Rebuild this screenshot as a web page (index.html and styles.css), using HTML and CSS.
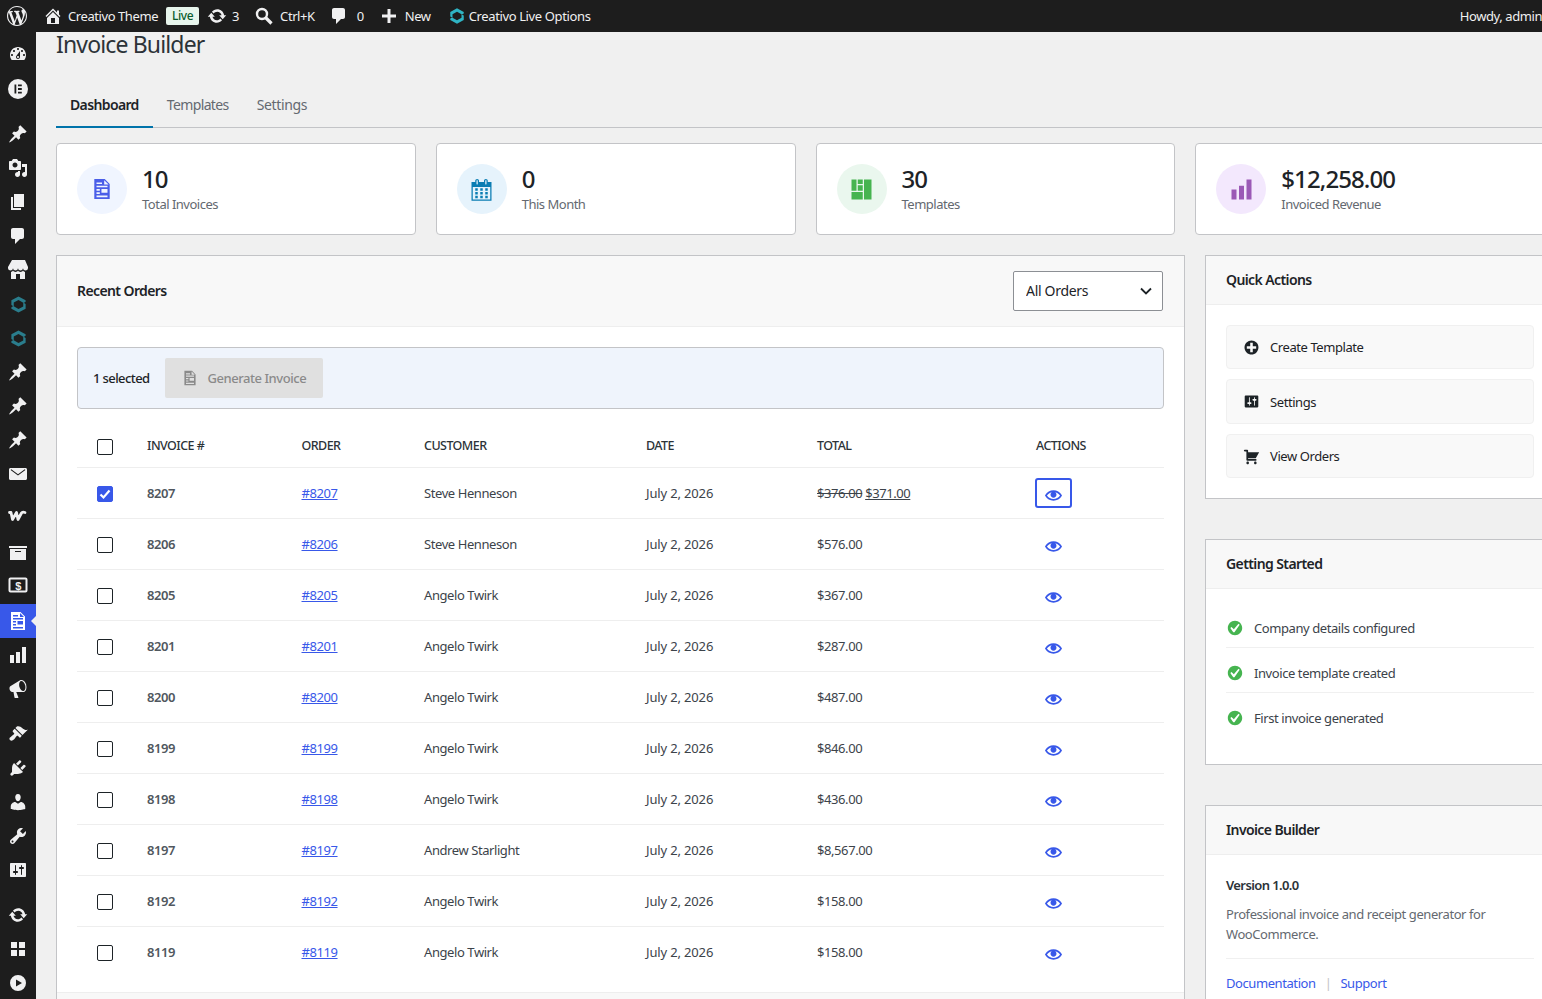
FILE: index.html
```html
<!DOCTYPE html>
<html lang="en">
<head>
    <meta charset="UTF-8">
    <meta name="viewport" content="width=device-width, initial-scale=1.0">
    <title>Invoice Builder</title>
    <link rel="stylesheet" href="styles.css">
</head>
<body>
    <svg class="sprite" xmlns="http://www.w3.org/2000/svg">
        <symbol id="i-wp" viewBox="0 0 20 20"><path d="M20 10c0-5.51-4.49-10-10-10C4.48 0 0 4.49 0 10c0 5.52 4.48 10 10 10 5.51 0 10-4.48 10-10zM7.78 15.37L4.37 6.22c.55-.02 1.17-.08 1.17-.08.5-.06.44-1.13-.06-1.11 0 0-1.45.11-2.37.11-.18 0-.37 0-.58-.01C4.12 2.69 6.87 1.11 10 1.11c2.33 0 4.45.87 6.05 2.34-.68-.11-1.65.39-1.65 1.58 0 .74.45 1.36.9 2.1.35.61.55 1.36.55 2.46 0 1.49-1.4 5-1.4 5l-3.03-8.37c.54-.02.82-.17.82-.17.5-.05.44-1.25-.06-1.22 0 0-1.44.12-2.38.12-.87 0-2.33-.12-2.33-.12-.5-.03-.56 1.2-.06 1.22l.92.08 1.26 3.41zM17.41 10c.24-.64.74-1.87.43-4.25.7 1.29 1.05 2.71 1.05 4.25 0 3.29-1.73 6.24-4.4 7.78.97-2.59 1.94-5.2 2.92-7.78zM6.1 18.09C3.12 16.65 1.11 13.53 1.11 10c0-1.3.23-2.48.72-3.59C3.25 10.3 4.67 14.2 6.1 18.09zm4.03-6.63l2.58 6.98c-.86.29-1.76.45-2.71.45-.79 0-1.57-.11-2.29-.33.81-2.38 1.62-4.74 2.42-7.1z"/></symbol>
        <symbol id="i-home" viewBox="0 0 20 20"><path d="M16 8.5l1.53 1.53-1.06 1.06L10 4.62l-6.47 6.47-1.06-1.06L10 2.5l4 4v-2h2v4zm-6-2.46l6 5.99V18H4v-5.97zM12 17v-5H8v5h4z"/></symbol>
        <symbol id="i-update" viewBox="0 0 20 20"><path d="M10.2 3.28c3.53 0 6.43 2.61 6.92 6h2.08l-3.5 4-3.5-4h2.32c-.45-1.97-2.21-3.45-4.32-3.45-1.45 0-2.73.71-3.54 1.78L4.95 5.66C6.23 4.2 8.11 3.28 10.2 3.28zm-.4 13.44c-3.52 0-6.43-2.61-6.92-6H.8l3.5-4c1.17 1.33 2.33 2.67 3.5 4H5.48c.45 1.97 2.21 3.45 4.32 3.45 1.45 0 2.73-.71 3.54-1.78l1.71 1.95c-1.28 1.46-3.15 2.38-5.25 2.38z"/></symbol>
        <symbol id="i-search" viewBox="0 0 20 20"><circle cx="8" cy="8" r="5" fill="none" stroke="currentColor" stroke-width="2.4"/><path d="M11.5 11.5l6 6" fill="none" stroke="currentColor" stroke-width="3.2"/></symbol>
        <symbol id="i-comment" viewBox="0 0 20 20"><path d="M5 2h9c1.1 0 2 .9 2 2v7c0 1.1-.9 2-2 2h-2l-5 5v-5H5c-1.1 0-2-.9-2-2V4c0-1.1.9-2 2-2z"/></symbol>
        <symbol id="i-plus" viewBox="0 0 20 20"><path d="M17 8.500v3h-5.500V17h-3v-5.500H3v-3h5.500V3h3v5.500z"/></symbol>
        <symbol id="i-hex" viewBox="0 0 20 20"><path d="M2.500 5.500L10 1.500l7.500 4v1.700l-2 1.100L10 5.200 5 8v4l-2.500-1.400z"/><path d="M17.500 14.500l-7.500 4-7.500-4v-1.700l2-1.100 5.500 3.100 5-2.800V8l2.500 1.400z"/></symbol>
        <symbol id="i-dashboard" viewBox="0 0 20 20"><path d="M3.760 16h12.480c1.100-1.370 1.760-3.110 1.760-5 0-4.420-3.580-8-8-8s-8 3.580-8 8c0 1.890.66 3.630 1.760 5zM10 4c.55 0 1 .45 1 1s-.45 1-1 1-1-.45-1-1 .45-1 1-1zM6 6c.55 0 1 .45 1 1s-.45 1-1 1-1-.45-1-1 .45-1 1-1zm8 0c.55 0 1 .45 1 1s-.45 1-1 1-1-.45-1-1 .45-1 1-1zm-5.370 5.550L12 7v6c0 1.100-.9 2-2 2s-2-.9-2-2c0-.57.24-1.080.63-1.450zM4 10c.55 0 1 .45 1 1s-.45 1-1 1-1-.45-1-1 .45-1 1-1zm12 0c.55 0 1 .45 1 1s-.45 1-1 1-1-.45-1-1 .45-1 1-1zm-5 3c0-.55-.45-1-1-1s-1 .45-1 1 .45 1 1 1 1-.45 1-1z"/></symbol>
        <symbol id="i-elementor" viewBox="0 0 20 20"><path fill-rule="evenodd" d="M10 0a10 10 0 100 20 10 10 0 000-20zM6.500 5.500h1.800v9H6.500zM10 5.500h3.800v1.800H10zM10 9.100h3.800v1.800H10zM10 12.700h3.800v1.800H10z"/></symbol>
        <symbol id="i-pin" viewBox="0 0 20 20"><path d="M10.440 3.020l1.820-1.820 6.360 6.350-1.830 1.820c-1.050-.68-2.480-.57-3.410.36l-.75.75c-.92.93-1.040 2.350-.35 3.410l-1.830 1.820-2.410-2.410-2.800 2.790c-.42.42-3.380 2.710-3.800 2.290s1.860-3.390 2.280-3.810l2.790-2.790L4.100 9.360l1.830-1.820c1.050.69 2.480.57 3.400-.36l.75-.75c.93-.92 1.050-2.350.36-3.410z"/></symbol>
        <symbol id="i-media" viewBox="0 0 20 20"><path d="M13 11V4c0-.55-.45-1-1-1h-1.670L9 1H5L3.670 3H2c-.55 0-1 .45-1 1v7c0 .55.45 1 1 1h10c.55 0 1-.45 1-1zM7 4.500c1.380 0 2.500 1.120 2.500 2.500S8.380 9.500 7 9.500 4.500 8.380 4.500 7 5.620 4.500 7 4.500zM14 6h5v10.500c0 1.380-1.120 2.500-2.500 2.500S14 17.880 14 16.500s1.120-2.500 2.500-2.500c.17 0 .34.02.5.05V9h-3V6zm-4 8.050V13h2v3.500c0 1.380-1.120 2.500-2.500 2.500S7 17.880 7 16.500 8.120 14 9.500 14c.17 0 .34.02.5.05z"/></symbol>
        <symbol id="i-page" viewBox="0 0 20 20"><path d="M6 15V2h10v13H6zm-1 1h8v2H3V5h2v11z"/></symbol>
        <symbol id="i-store" viewBox="0 0 20 20"><path d="M1 10c.41.29.96.43 1.500.43.55 0 1.090-.14 1.500-.43.62-.46 1-1.170 1-2 0 .83.37 1.540 1 2 .41.29.96.43 1.500.43.55 0 1.090-.14 1.500-.43.62-.46 1-1.170 1-2 0 .83.37 1.540 1 2 .41.29.96.43 1.510.43.54 0 1.080-.14 1.490-.43.62-.46 1-1.170 1-2 0 .83.37 1.540 1 2 .41.29.96.43 1.500.43.55 0 1.090-.14 1.500-.43.63-.46 1-1.170 1-2V7l-3-7H4L0 7v1c0 .83.37 1.540 1 2zm2 8.990h5v-5h4v5h5v-7c-.37-.05-.72-.22-1-.43-.63-.45-1-.73-1-1.560 0 .83-.38 1.110-1 1.560-.41.3-.95.43-1.490.44-.55 0-1.100-.14-1.510-.44-.63-.45-1-.73-1-1.560 0 .83-.38 1.110-1 1.560-.41.3-.95.43-1.500.44-.54 0-1.090-.14-1.500-.44-.63-.45-1-.73-1-1.570 0 .84-.38 1.120-1 1.570-.29.21-.63.38-1 .44v6.990z"/></symbol>
        <symbol id="i-mail" viewBox="0 0 20 20"><path fill-rule="evenodd" d="M2.500 4h15c.83 0 1.500.67 1.500 1.500v9c0 .83-.67 1.500-1.500 1.500h-15C1.670 16 1 15.330 1 14.500v-9C1 4.670 1.670 4 2.500 4zM3.300 5.200l-.7.9L10 11.600l7.400-5.500-.7-.9L10 10.200z"/></symbol>
        <symbol id="i-woo" viewBox="0 0 20 20"><path d="M1.500 6.500H3l1.500 7 4-7 1.500 7 3.500-6.500c.6-1 2-1 3.500-.5" fill="none" stroke="currentColor" stroke-width="2.800" stroke-linejoin="round" stroke-linecap="round"/></symbol>
        <symbol id="i-archive" viewBox="0 0 20 20"><path d="M19 3v2H1V3h18zM2 6h16v11H2V6zm11 3V8H7v1h6z"/></symbol>
        <symbol id="i-money" viewBox="0 0 20 20"><rect x="1.500" y="3.500" width="17" height="13" rx="1" fill="none" stroke="currentColor" stroke-width="2"/><text x="10" y="14.500" text-anchor="middle" font-family="Liberation Sans, sans-serif" font-size="11" font-weight="700" fill="currentColor">$</text></symbol>
        <symbol id="i-invoice" viewBox="0 0 20 20"><path fill-rule="evenodd" d="M3 1h9.500L17 5.500V19H3zM12 2v4h4zM5 4v1.500h5V4zM5 7v1.500h10V7zM5 10v1.500h3V10zM9.500 10v3.500H15V10zM5 13v1.500h3V13zM5 16v1.500h10V16z"/></symbol>
        <symbol id="i-chart" viewBox="0 0 20 20"><path d="M18 18V2h-4v16h4zm-6 0V7H8v11h4zm-6 0v-8H2v8h4z"/></symbol>
        <symbol id="i-megaphone" viewBox="0 0 20 20"><path d="M18.150 5.940c.46 1.620.38 3.220-.02 4.480-.42 1.280-1.260 2.180-2.300 2.480-.16.06-.26.06-.4.06-.06.02-.12.02-.18.02-.06.02-.14.02-.22.02h-6.800l2.220 5.500c.02.14-.06.26-.14.34-.08.1-.24.16-.34.16H6.950c-.1 0-.26-.06-.34-.16-.08-.08-.16-.2-.14-.34l-1-5.500H4.250l-.02-.02c-.5.06-1.080-.18-1.540-.62s-.88-1.080-1.060-1.880c-.24-.8-.2-1.560-.02-2.200.18-.62.58-1.080 1.060-1.300l.02-.02 9-5.400c.1-.06.18-.1.24-.16.06-.04.14-.08.24-.12.16-.08.28-.12.5-.18 1.040-.3 2.240.1 3.260.95 1.040.88 1.880 2.240 2.340 3.860zm-2.580 5.980h-.02c.4-.1.74-.34 1.040-.7.58-.7.86-1.760.86-3.040-.02-.64-.1-1.300-.28-1.980-.34-1.360-1.020-2.500-1.780-3.240-.76-.72-1.680-1.080-2.460-.86-.38.1-.7.34-1 .7-.58.7-.84 1.760-.84 3.040.02.64.1 1.300.28 1.980.34 1.340 1 2.480 1.780 3.200.78.74 1.620 1.100 2.420.9z"/></symbol>
        <symbol id="i-brush" viewBox="0 0 20 20"><path d="M14.480 11.060L7.410 3.990l1.500-1.500c.5-.56 2.300-.47 3.510.32 1.210.8 1.430 1.280 2.910 2.100 1.180.64 2.450 1.260 4.450.85zm-.71.71L6.700 4.700 4.930 6.470c-.39.39-.39 1.020 0 1.410l1.060 1.060c.39.39.39 1.030 0 1.420-.6.6-1.430 1.110-2.210 1.690-.35.26-.7.530-1.010.84C1.430 13.230.91 14.960 2 16.050c1.100 1.100 2.820.59 4.160-.75.31-.31.58-.66.84-1.010.58-.78 1.090-1.610 1.690-2.210.39-.39 1.030-.39 1.420 0l1.060 1.060c.39.39 1.020.39 1.410 0z"/></symbol>
        <symbol id="i-plugin" viewBox="0 0 20 20"><path d="M13.110 4.360L9.870 7.600 8 5.730l3.240-3.240c.35-.34 1.050-.2 1.560.32.52.51.66 1.210.31 1.550zm-8 1.770l.91-1.120 9.010 9.010-1.190.84c-.71.71-2.630 1.160-3.820 1.160H6.140L4.900 17.260c-.59.59-1.540.59-2.120 0-.59-.58-.59-1.530 0-2.120l1.240-1.240v-3.880c0-1.130.4-3.190 1.090-3.890zm7.260 3.970l3.240-3.240c.34-.35 1.040-.21 1.550.31.52.51.66 1.210.31 1.550l-3.240 3.250z"/></symbol>
        <symbol id="i-user" viewBox="0 0 20 20"><path d="M10 9.250c-2.270 0-2.730-3.440-2.730-3.440C7 4.020 7.820 2 9.970 2c2.160 0 2.980 2.020 2.710 3.810 0 0-.41 3.440-2.680 3.440zm0 2.570L12.720 10c2.390 0 4.520 2.330 4.520 4.530v2.490s-3.650 1.130-7.240 1.130c-3.650 0-7.240-1.130-7.240-1.130v-2.490c0-2.250 1.940-4.480 4.470-4.480z"/></symbol>
        <symbol id="i-tools" viewBox="0 0 20 20"><path d="M16.680 9.770c-1.340 1.340-3.300 1.670-4.950.99l-5.410 6.520c-.99.99-2.590.99-3.580 0s-.99-2.590 0-3.570l6.520-5.420c-.68-1.650-.35-3.610.99-4.950 1.280-1.280 3.120-1.620 4.720-1.060l-2.890 2.890 2.820 2.820 2.860-2.870c.53 1.580.18 3.390-1.080 4.650zM3.810 16.210c.4.39 1.040.39 1.430 0 .4-.4.4-1.040 0-1.430-.39-.4-1.030-.4-1.430 0-.39.39-.39 1.030 0 1.430z"/></symbol>
        <symbol id="i-settings" viewBox="0 0 20 20"><path d="M18 16V4c0-.55-.45-1-1-1H3c-.55 0-1 .45-1 1v12c0 .55.45 1 1 1h14c.55 0 1-.45 1-1zM8 11h1c.55 0 1 .45 1 1s-.45 1-1 1H8v1.500c0 .28-.22.5-.5.5s-.5-.22-.5-.5V13H6c-.55 0-1-.45-1-1s.45-1 1-1h1V5.500c0-.28.22-.5.5-.5s.5.22.5.5V11zm5-2h-1c-.55 0-1-.45-1-1s.45-1 1-1h1V5.500c0-.28.22-.5.5-.5s.5.22.5.5V7h1c.55 0 1 .45 1 1s-.45 1-1 1h-1v5.500c0 .28-.22.5-.5.5s-.5-.22-.5-.5V9z"/></symbol>
        <symbol id="i-grid" viewBox="0 0 20 20"><path d="M9 9V3H3v6h6zm8 0V3h-6v6h6zm-8 8v-6H3v6h6zm8 0v-6h-6v6h6z"/></symbol>
        <symbol id="i-play" viewBox="0 0 20 20"><path fill-rule="evenodd" d="M10 2a8 8 0 100 16 8 8 0 000-16zM8 6.500l6 3.500-6 3.500z"/></symbol>
        <symbol id="i-calendar" viewBox="0 0 20 20"><path d="M15 4h3v15H2V4h3V3c0-.41.15-.76.44-1.060.29-.29.65-.44 1.060-.44s.77.15 1.060.44c.29.3.44.65.44 1.060v1h4V3c0-.41.15-.76.44-1.060.29-.29.65-.44 1.060-.44s.77.15 1.060.44c.29.3.44.65.44 1.060v1zM6 3v2.500c0 .14.05.26.15.36.09.09.21.14.35.14s.26-.05.35-.14c.1-.1.15-.22.15-.36V3c0-.14-.05-.26-.15-.35-.09-.1-.21-.15-.35-.15s-.26.05-.35.15c-.1.09-.15.21-.15.35zm7 0v2.500c0 .14.05.26.14.36.1.09.22.14.36.14s.26-.05.36-.14c.09-.1.14-.22.14-.36V3c0-.14-.05-.26-.14-.35-.1-.1-.22-.15-.36-.15s-.26.05-.36.15c-.09.09-.14.21-.14.35zm4 15V8H3v10h14zM7 9v2H5V9h2zm2 0h2v2H9V9zm4 2V9h2v2h-2zm-6 1v2H5v-2h2zm2 0h2v2H9v-2zm4 2v-2h2v2h-2zm-6 1v2H5v-2h2zm4 2H9v-2h2v2zm4 0h-2v-2h2v2z"/></symbol>
        <symbol id="i-layout" viewBox="0 0 20 20"><path d="M2 2h4v9H2zM7 2h4v3.500H7zM12 2h6v16h-6zM7 6.500h4V11H7zM2 12h9v6H2z"/></symbol>
        <symbol id="i-plus-alt" viewBox="0 0 20 20"><path d="M15.800 4.200c3.200 3.210 3.200 8.390 0 11.600-3.210 3.200-8.390 3.200-11.600 0C1 12.590 1 7.410 4.200 4.200 7.410 1 12.590 1 15.800 4.200zm-4.300 11.300v-4h4v-3h-4v-4h-3v4h-4v3h4v4h3z"/></symbol>
        <symbol id="i-cart" viewBox="0 0 20 20"><path d="M6 13h9c.55 0 1 .45 1 1s-.45 1-1 1H5c-.55 0-1-.45-1-1V4H2c-.55 0-1-.45-1-1s.45-1 1-1h3c.55 0 1 .45 1 1v2h13l-4 7H6v1zm-.5 3c.83 0 1.500.67 1.500 1.500S6.330 19 5.500 19 4 18.330 4 17.500 4.670 16 5.500 16zm9 0c.83 0 1.500.67 1.500 1.500s-.67 1.500-1.500 1.500-1.500-.67-1.500-1.500.67-1.500 1.500-1.500z"/></symbol>
        <symbol id="i-yes" viewBox="0 0 20 20"><path d="M10 2c-4.420 0-8 3.580-8 8s3.580 8 8 8 8-3.580 8-8-3.580-8-8-8zm-.615 12.660h-1.340l-3.240-4.540 1.340-1.250 2.570 2.400 5.140-5.930 1.340.94-5.810 8.380z"/></symbol>
        <symbol id="i-eye" viewBox="0 0 20 20"><path d="M19.700 9.400C17.700 6 14 3.900 10 3.900S2.300 6 .3 9.400L0 10l.3.6c2 3.400 5.700 5.500 9.700 5.500s7.700-2.100 9.700-5.500l.3-.6-.3-.6zM10 14.100c-3.100 0-6-1.600-7.700-4.100C3.600 8 5.700 6.600 8 6.100c-.9.6-1.500 1.700-1.500 2.900 0 1.900 1.600 3.500 3.500 3.500s3.500-1.600 3.500-3.500c0-1.200-.6-2.300-1.500-2.900 2.300.5 4.400 1.900 5.700 3.900-1.700 2.500-4.600 4.100-7.700 4.100z"/></symbol>
    </svg>

    <header class="adminbar">
        <svg class="ab-logo"><use href="#i-wp"/></svg>
        <a class="ab-item ab-site"><svg class="ab-icon"><use href="#i-home"/></svg>Creativo Theme</a>
        <span class="ab-live">Live</span>
        <a class="ab-item ab-updates"><svg class="ab-icon"><use href="#i-update"/></svg>3</a>
        <a class="ab-item ab-search"><svg class="ab-icon"><use href="#i-search"/></svg>Ctrl+K</a>
        <a class="ab-item ab-comments"><svg class="ab-icon"><use href="#i-comment"/></svg>0</a>
        <a class="ab-item ab-new"><svg class="ab-icon"><use href="#i-plus"/></svg>New</a>
        <a class="ab-item ab-options"><svg class="ab-icon ab-hex"><use href="#i-hex"/></svg>Creativo Live Options</a>
        <a class="ab-item ab-howdy">Howdy, admin</a>
    </header>

    <div class="layout">
        <nav class="sidemenu">
            <a class="menu-item"><svg><use href="#i-dashboard"/></svg></a>
            <a class="menu-item mt-1"><svg><use href="#i-elementor"/></svg></a>
            <a class="menu-item mt-11"><svg><use href="#i-pin"/></svg></a>
            <a class="menu-item"><svg><use href="#i-media"/></svg></a>
            <a class="menu-item"><svg><use href="#i-page"/></svg></a>
            <a class="menu-item"><svg><use href="#i-comment"/></svg></a>
            <a class="menu-item"><svg><use href="#i-store"/></svg></a>
            <a class="menu-item teal"><svg><use href="#i-hex"/></svg></a>
            <a class="menu-item teal"><svg><use href="#i-hex"/></svg></a>
            <a class="menu-item"><svg><use href="#i-pin"/></svg></a>
            <a class="menu-item"><svg><use href="#i-pin"/></svg></a>
            <a class="menu-item"><svg><use href="#i-pin"/></svg></a>
            <a class="menu-item"><svg><use href="#i-mail"/></svg></a>
            <a class="menu-item mt-8"><svg><use href="#i-woo"/></svg></a>
            <a class="menu-item mt-3"><svg><use href="#i-archive"/></svg></a>
            <a class="menu-item mt-n2"><svg><use href="#i-money"/></svg></a>
            <a class="menu-item active mt-2"><svg><use href="#i-invoice"/></svg></a>
            <a class="menu-item"><svg><use href="#i-chart"/></svg></a>
            <a class="menu-item"><svg><use href="#i-megaphone"/></svg></a>
            <a class="menu-item mt-11"><svg><use href="#i-brush"/></svg></a>
            <a class="menu-item"><svg><use href="#i-plugin"/></svg></a>
            <a class="menu-item"><svg><use href="#i-user"/></svg></a>
            <a class="menu-item"><svg><use href="#i-tools"/></svg></a>
            <a class="menu-item"><svg><use href="#i-settings"/></svg></a>
            <a class="menu-item mt-11"><svg><use href="#i-update"/></svg></a>
            <a class="menu-item"><svg><use href="#i-grid"/></svg></a>
            <a class="menu-item"><svg><use href="#i-play"/></svg></a>
        </nav>

        <main class="content">
            <h1 class="page-title">Invoice Builder</h1>

            <div class="tabs">
                <a class="tab current">Dashboard</a>
                <a class="tab">Templates</a>
                <a class="tab">Settings</a>
            </div>

            <section class="stats">
                <div class="stat">
                    <span class="stat-icon blue"><svg class="doc"><use href="#i-invoice"/></svg></span>
                    <div><div class="stat-value">10</div><div class="stat-label">Total Invoices</div></div>
                </div>
                <div class="stat">
                    <span class="stat-icon sky"><svg><use href="#i-calendar"/></svg></span>
                    <div><div class="stat-value">0</div><div class="stat-label">This Month</div></div>
                </div>
                <div class="stat">
                    <span class="stat-icon green"><svg><use href="#i-layout"/></svg></span>
                    <div><div class="stat-value">30</div><div class="stat-label">Templates</div></div>
                </div>
                <div class="stat">
                    <span class="stat-icon purple"><svg><use href="#i-chart"/></svg></span>
                    <div><div class="stat-value">$12,258.00</div><div class="stat-label">Invoiced Revenue</div></div>
                </div>
            </section>

            <div class="columns">
                <section class="card orders">
                    <div class="card-head orders-head">
                        <h2>Recent Orders</h2>
                        <select class="filter"><option>All Orders</option></select>
                    </div>
                    <div class="orders-body">
                        <div class="bulk-bar">
                            <span class="bulk-count">1 selected</span>
                            <button class="bulk-btn"><svg><use href="#i-invoice"/></svg>Generate Invoice</button>
                        </div>
                        <table class="orders-table">
                            <thead>
                                <tr>
                                    <th class="c-check"><input type="checkbox"></th>
                                    <th class="c-num">Invoice #</th>
                                    <th class="c-order">Order</th>
                                    <th class="c-customer">Customer</th>
                                    <th class="c-date">Date</th>
                                    <th class="c-total">Total</th>
                                    <th>Actions</th>
                                </tr>
                            </thead>
                            <tbody>
                                <tr>
                                    <td class="c-check"><input type="checkbox" checked></td>
                                    <td class="num">8207</td><td><a href="#">#8207</a></td><td>Steve Henneson</td><td>July 2, 2026</td>
                                    <td><del>$376.00</del> <ins>$371.00</ins></td>
                                    <td><a class="view focused"><svg><use href="#i-eye"/></svg></a></td>
                                </tr>
                                <tr>
                                    <td class="c-check"><input type="checkbox"></td>
                                    <td class="num">8206</td><td><a href="#">#8206</a></td><td>Steve Henneson</td><td>July 2, 2026</td><td>$576.00</td>
                                    <td><a class="view"><svg><use href="#i-eye"/></svg></a></td>
                                </tr>
                                <tr>
                                    <td class="c-check"><input type="checkbox"></td>
                                    <td class="num">8205</td><td><a href="#">#8205</a></td><td>Angelo Twirk</td><td>July 2, 2026</td><td>$367.00</td>
                                    <td><a class="view"><svg><use href="#i-eye"/></svg></a></td>
                                </tr>
                                <tr>
                                    <td class="c-check"><input type="checkbox"></td>
                                    <td class="num">8201</td><td><a href="#">#8201</a></td><td>Angelo Twirk</td><td>July 2, 2026</td><td>$287.00</td>
                                    <td><a class="view"><svg><use href="#i-eye"/></svg></a></td>
                                </tr>
                                <tr>
                                    <td class="c-check"><input type="checkbox"></td>
                                    <td class="num">8200</td><td><a href="#">#8200</a></td><td>Angelo Twirk</td><td>July 2, 2026</td><td>$487.00</td>
                                    <td><a class="view"><svg><use href="#i-eye"/></svg></a></td>
                                </tr>
                                <tr>
                                    <td class="c-check"><input type="checkbox"></td>
                                    <td class="num">8199</td><td><a href="#">#8199</a></td><td>Angelo Twirk</td><td>July 2, 2026</td><td>$846.00</td>
                                    <td><a class="view"><svg><use href="#i-eye"/></svg></a></td>
                                </tr>
                                <tr>
                                    <td class="c-check"><input type="checkbox"></td>
                                    <td class="num">8198</td><td><a href="#">#8198</a></td><td>Angelo Twirk</td><td>July 2, 2026</td><td>$436.00</td>
                                    <td><a class="view"><svg><use href="#i-eye"/></svg></a></td>
                                </tr>
                                <tr>
                                    <td class="c-check"><input type="checkbox"></td>
                                    <td class="num">8197</td><td><a href="#">#8197</a></td><td>Andrew Starlight</td><td>July 2, 2026</td><td>$8,567.00</td>
                                    <td><a class="view"><svg><use href="#i-eye"/></svg></a></td>
                                </tr>
                                <tr>
                                    <td class="c-check"><input type="checkbox"></td>
                                    <td class="num">8192</td><td><a href="#">#8192</a></td><td>Angelo Twirk</td><td>July 2, 2026</td><td>$158.00</td>
                                    <td><a class="view"><svg><use href="#i-eye"/></svg></a></td>
                                </tr>
                                <tr>
                                    <td class="c-check"><input type="checkbox"></td>
                                    <td class="num">8119</td><td><a href="#">#8119</a></td><td>Angelo Twirk</td><td>July 2, 2026</td><td>$158.00</td>
                                    <td><a class="view"><svg><use href="#i-eye"/></svg></a></td>
                                </tr>
                            </tbody>
                        </table>
                    </div>
                    <div class="orders-foot"></div>
                </section>

                <aside class="side">
                    <section class="card">
                        <div class="card-head"><h2>Quick Actions</h2></div>
                        <div class="card-body actions">
                            <a class="action"><svg><use href="#i-plus-alt"/></svg>Create Template</a>
                            <a class="action"><svg><use href="#i-settings"/></svg>Settings</a>
                            <a class="action"><svg><use href="#i-cart"/></svg>View Orders</a>
                        </div>
                    </section>

                    <section class="card">
                        <div class="card-head"><h2>Getting Started</h2></div>
                        <ul class="card-body checklist">
                            <li><svg><use href="#i-yes"/></svg>Company details configured</li>
                            <li><svg><use href="#i-yes"/></svg>Invoice template created</li>
                            <li><svg><use href="#i-yes"/></svg>First invoice generated</li>
                        </ul>
                    </section>

                    <section class="card">
                        <div class="card-head"><h2>Invoice Builder</h2></div>
                        <div class="card-body about">
                            <p class="version">Version 1.0.0</p>
                            <p class="about-text">Professional invoice and receipt generator for WooCommerce.</p>
                            <div class="about-links"><a>Documentation</a><span>|</span><a>Support</a></div>
                        </div>
                    </section>
                </aside>
            </div>
        </main>
    </div>
</body>
</html>
```

FILE: styles.css
```css
html, body {
    height: 100%;
    overflow: hidden;
}

body {
    margin: 0;
    background-color: #f0f0f0;
    color: #1d2327;
    font-family: "Noto Sans", sans-serif;
    font-size: 13px;
    letter-spacing: -0.42px;
}

.sprite {
    display: none;
}

svg {
    fill: currentColor;
    flex: none;
}

/* admin bar */
.adminbar {
    display: flex;
    align-items: center;
    height: 32px;
    overflow: hidden;
    background-color: #1d1d1d;
    color: #f0f0f1;
}

.ab-logo {
    width: 20px;
    height: 20px;
    margin-left: 7px;
}

.ab-item {
    display: flex;
    align-items: center;
    white-space: nowrap;
}

.ab-icon {
    width: 20px;
    height: 20px;
    margin-right: 5px;
}

.ab-site {
    margin-left: 16px;
}

.ab-live {
    flex: none;
    width: 33px;
    margin-left: 8px;
    height: 18px;
    line-height: 18px;
    text-align: center;
    border-radius: 2px;
    background-color: #e7f5ec;
    color: #0a5c2b;
    font-size: 12px;
    font-weight: 500;
}

.ab-updates {
    margin-left: 8px;
}

.ab-search {
    margin-left: 15px;
}

.ab-search .ab-icon {
    margin-right: 6px;
}

.ab-comments {
    margin-left: 14px;
}

.ab-comments .ab-icon {
    margin-right: 8px;
}

.ab-new {
    margin-left: 15px;
}

.ab-new .ab-icon {
    margin-right: 6px;
}

.ab-options {
    margin-left: 17px;
    letter-spacing: -0.37px;
}

.ab-options .ab-hex {
    width: 18px;
    height: 18px;
    margin-right: 3px;
    color: #2fb4c4;
}

.ab-howdy {
    flex: 0 0 82px;
    margin-left: auto;
}

/* layout */
.layout {
    display: flex;
    align-items: flex-start;
}

.sidemenu {
    flex: none;
    width: 36px;
    height: 967px;
    padding-top: 5px;
    box-sizing: border-box;
    overflow: hidden;
    background-color: #1d1d1d;
    color: #f0f0f1;
}

.menu-item {
    position: relative;
    display: flex;
    align-items: center;
    justify-content: center;
    height: 34px;
}

.menu-item svg {
    width: 20px;
    height: 20px;
}

.mt-1 { margin-top: 1px; }
.mt-2 { margin-top: 2px; }
.mt-3 { margin-top: 3px; }
.mt-8 { margin-top: 8px; }
.mt-11 { margin-top: 11px; }
.mt-n2 { margin-top: -2px; }

.menu-item.teal {
    color: #2a7d8c;
}

.menu-item.teal svg {
    width: 19px;
    height: 19px;
}

.menu-item.active {
    background-color: #3858e9;
    color: #fff;
}

.menu-item.active::after {
    content: "";
    position: absolute;
    right: 0;
    top: 12px;
    border: 5px solid transparent;
    border-right-color: #f0f0f0;
    border-left-width: 0;
}

.content {
    flex: none;
    width: 1499px;
    margin-left: 20px;
}

.page-title {
    margin: 0;
    height: 26px;
    font-size: 23px;
    font-weight: 400;
    line-height: 24px;
    letter-spacing: -0.85px;
    color: #2c3338;
}

/* tabs */
.tabs {
    display: flex;
    margin-top: 26px;
    height: 44px;
    box-sizing: border-box;
    border-bottom: 1px solid #c3c4c7;
}

.tab {
    height: 44px;
    padding: 0 14px;
    box-sizing: border-box;
    line-height: 42px;
    font-size: 14px;
    letter-spacing: -0.63px;
    color: #646970;
}

.tab:last-child {
    letter-spacing: -0.35px;
}

.tab.current {
    color: #1d2327;
    font-weight: 600;
    border-bottom: 2px solid #0073aa;
}

/* stat cards */
.stats {
    display: grid;
    grid-template-columns: repeat(4, 1fr);
    gap: 20px;
    margin-top: 15px;
}

.stat {
    display: flex;
    align-items: center;
    gap: 15px;
    height: 92px;
    padding: 0 20px;
    box-sizing: border-box;
    background-color: #fff;
    border: 1px solid #c3c4c7;
    border-radius: 4px;
}

.stat-icon {
    display: flex;
    align-items: center;
    justify-content: center;
    width: 50px;
    height: 50px;
    border-radius: 50%;
}

.stat-icon svg {
    width: 25px;
    height: 25px;
}

.stat-icon svg.doc {
    width: 22px;
    height: 22px;
}

.stat-icon.blue { background-color: #f0f5ff; color: #4a5ee8; }
.stat-icon.sky { background-color: #e6f3fc; color: #0a7db3; }
.stat-icon.green { background-color: #eaf7ee; color: #46b450; }
.stat-icon.purple { background-color: #f3e8fd; color: #9b59b6; }

.stat-value {
    margin-top: -2px;
    font-size: 24px;
    font-weight: 500;
    line-height: 30px;
    letter-spacing: -0.9px;
}

.stat-label {
    margin-top: 1px;
    color: #646970;
    line-height: 18px;
    letter-spacing: -0.5px;
}

/* cards */
.columns {
    display: grid;
    grid-template-columns: 1129px 350px;
    gap: 20px;
    margin-top: 20px;
}

.card {
    background-color: #fff;
    border: 1px solid #c3c4c7;
}

.card-head {
    display: flex;
    align-items: center;
    justify-content: space-between;
    height: 49px;
    padding: 0 20px;
    box-sizing: border-box;
    background-color: #f8f8f8;
    border-bottom: 1px solid #eee;
}

.card-head h2 {
    margin: 0 0 1px;
    font-size: 14px;
    font-weight: 600;
    letter-spacing: -0.6px;
}

.card-body {
    padding: 20px;
}

.orders-head {
    height: 71px;
    padding-right: 21px;
}

.filter {
    appearance: none;
    width: 150px;
    height: 40px;
    padding: 0 12px 2px;
    background: #fff url("data:image/svg+xml;utf8,<svg xmlns='http://www.w3.org/2000/svg' width='12' height='8'><path d='M1 1.500l5 5 5-5' fill='none' stroke='%231d2327' stroke-width='1.800'/></svg>") no-repeat right 10px center;
    border: 1px solid #8c8f94;
    border-radius: 2px;
    color: #1d2327;
    font-family: inherit;
    font-size: 14px;
    letter-spacing: -0.3px;
}

.orders-body {
    padding: 20px 20px 0;
}

.bulk-bar {
    display: flex;
    align-items: center;
    gap: 16px;
    height: 62px;
    padding: 0 15px;
    box-sizing: border-box;
    background-color: #eff4fc;
    border: 1px solid #c3c4c7;
    border-radius: 4px;
}

.bulk-count {
    font-weight: 500;
    letter-spacing: -0.6px;
}

.bulk-btn {
    display: flex;
    align-items: center;
    gap: 9px;
    height: 40px;
    padding: 0 17px;
    background-color: #e0e0e0;
    border: 0;
    border-radius: 2px;
    color: #8a8a8a;
    font-family: inherit;
    font-size: 13px;
    font-weight: 500;
    letter-spacing: -0.45px;
}

.bulk-btn svg {
    width: 16px;
    height: 16px;
}

.orders-table {
    width: 100%;
    margin-top: 16px;
    table-layout: fixed;
    border-collapse: collapse;
}

.orders-table th {
    height: 42px;
    padding: 0 10px;
    box-sizing: border-box;
    text-align: left;
    font-size: 12.5px;
    font-weight: 500;
    letter-spacing: -0.55px;
    text-transform: uppercase;
    color: #2c3338;
    border-bottom: 1px solid #eee;
}

.orders-table td {
    height: 51px;
    padding: 0 10px;
    box-sizing: border-box;
    color: #3c434a;
    border-bottom: 1px solid #eee;
}

.orders-table td:nth-child(5) {
    letter-spacing: -0.15px;
}

.orders-table tbody tr:last-child td {
    border-bottom: 0;
}

.orders-table .c-check {
    width: 60px;
    padding-left: 20px;
}

.c-num { width: 154.5px; }
.c-order { width: 122.5px; }
.c-customer { width: 222px; }
.c-date { width: 171px; }
.c-total { width: 219px; }

.orders-table .num {
    font-weight: 600;
    color: #50575e;
}

.orders-table a[href] {
    color: #3858e9;
}

.orders-table input {
    display: block;
    appearance: none;
    width: 16px;
    height: 16px;
    margin: 2px 0 0;
    background-color: #fff;
    border: 1px solid #1d2327;
    border-radius: 2px;
}

.orders-table input:checked {
    background: #3858e9 url("data:image/svg+xml;utf8,<svg xmlns='http://www.w3.org/2000/svg' width='16' height='16'><path d='M3.500 8.500l3 3 6-7' fill='none' stroke='white' stroke-width='2.200'/></svg>") no-repeat center;
    border-color: #3858e9;
}

.orders-table ins {
    text-decoration: underline;
}

.view {
    display: inline-flex;
    align-items: center;
    justify-content: center;
    width: 37px;
    height: 30px;
    box-sizing: border-box;
    margin-left: -1px;
    padding-top: 6px;
    color: #3858e9;
    vertical-align: middle;
}

.view svg {
    width: 17px;
    height: 17px;
}

.view.focused {
    border: 2px solid #3858e9;
    border-radius: 3px;
}

.orders-foot {
    height: 40px;
    margin-top: 15px;
    background-color: #f8f8f8;
    border-top: 1px solid #eee;
}

/* right column */
.side {
    display: flex;
    flex-direction: column;
    gap: 40px;
}

.actions {
    display: flex;
    flex-direction: column;
    gap: 10px;
}

.action {
    display: flex;
    align-items: center;
    gap: 10px;
    height: 44px;
    padding: 0 16px;
    box-sizing: border-box;
    background-color: #f9f9f9;
    border: 1px solid #f0f0f0;
    border-radius: 4px;
}

.action:nth-child(2) {
    height: 45px;
}

.action svg {
    width: 17px;
    height: 17px;
}

.checklist {
    margin: 0;
    padding: 14px 20px 27px;
    list-style: none;
    color: #3c434a;
}

.checklist li {
    display: flex;
    align-items: center;
    gap: 10px;
    padding: 15px 0 9px;
    line-height: 20px;
    border-bottom: 1px solid #f0f0f0;
}

.checklist li:last-child {
    border-bottom: 0;
}

.checklist svg {
    width: 18px;
    height: 18px;
    color: #46b450;
}

.about {
    color: #646970;
}

.about p {
    margin: 0;
}

.about .version {
    color: #2c3338;
    font-weight: 600;
    line-height: 20px;
    letter-spacing: -0.6px;
}

.about .about-text {
    margin-top: 9px;
    padding-bottom: 14px;
    line-height: 20px;
    border-bottom: 1px solid #f0f0f0;
}

.about-links {
    display: flex;
    gap: 9px;
    margin-top: 15px;
    color: #3858e9;
}

.about-links span {
    color: #c3c4c7;
}
```
